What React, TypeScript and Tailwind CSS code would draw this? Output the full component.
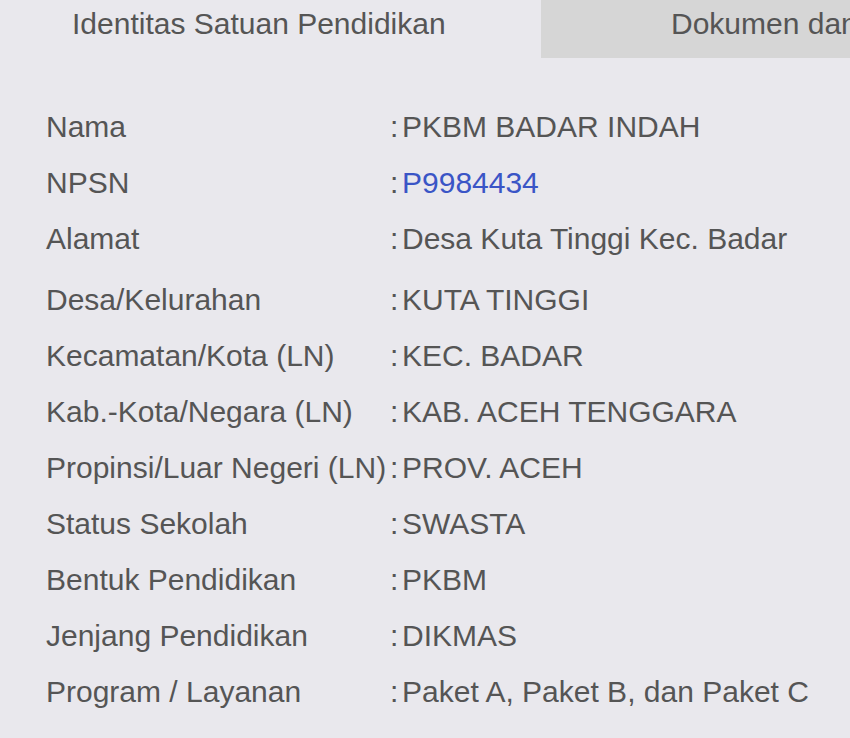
import React from "react";

const rows: { label: string; value: string; link?: boolean; extra?: boolean }[] = [
  { label: "Nama", value: "PKBM BADAR INDAH" },
  { label: "NPSN", value: "P9984434", link: true },
  { label: "Alamat", value: "Desa Kuta Tinggi Kec. Badar", extra: true },
  { label: "Desa/Kelurahan", value: "KUTA TINGGI" },
  { label: "Kecamatan/Kota (LN)", value: "KEC. BADAR" },
  { label: "Kab.-Kota/Negara (LN)", value: "KAB. ACEH TENGGARA" },
  { label: "Propinsi/Luar Negeri (LN)", value: "PROV. ACEH" },
  { label: "Status Sekolah", value: "SWASTA" },
  { label: "Bentuk Pendidikan", value: "PKBM" },
  { label: "Jenjang Pendidikan", value: "DIKMAS" },
  { label: "Program / Layanan", value: "Paket A, Paket B, dan Paket C" },
];

export default function App() {
  return (
    <div
      className="w-[850px] h-[738px] overflow-hidden bg-[#e9e8ed] text-[#555555]"
      style={{ fontFamily: '"Liberation Sans", Arial, Helvetica, sans-serif' }}
    >
      <div className="flex h-[58px] whitespace-nowrap">
        <div className="w-[541px] shrink-0 pl-[72px] text-[30px] leading-[48px]">
          Identitas Satuan Pendidikan
        </div>
        <div className="flex-1 bg-[#d6d6d6] pl-[130px] text-[30px] leading-[48px] overflow-hidden">
          Dokumen dan Legalitas
        </div>
      </div>
      <div className="pt-[41px] pl-[46px] text-[30px]">
        {rows.map((r) => (
          <div
            key={r.label}
            className={`flex h-[56px] items-center whitespace-nowrap leading-[56px] ${r.extra ? "mb-[5px]" : ""}`}
          >
            <div className="w-[344px] shrink-0">{r.label}</div>
            <div className="w-[12px] shrink-0">:</div>
            <div className={r.link ? "text-[#3a55c6]" : ""}>{r.value}</div>
          </div>
        ))}
      </div>
    </div>
  );
}
